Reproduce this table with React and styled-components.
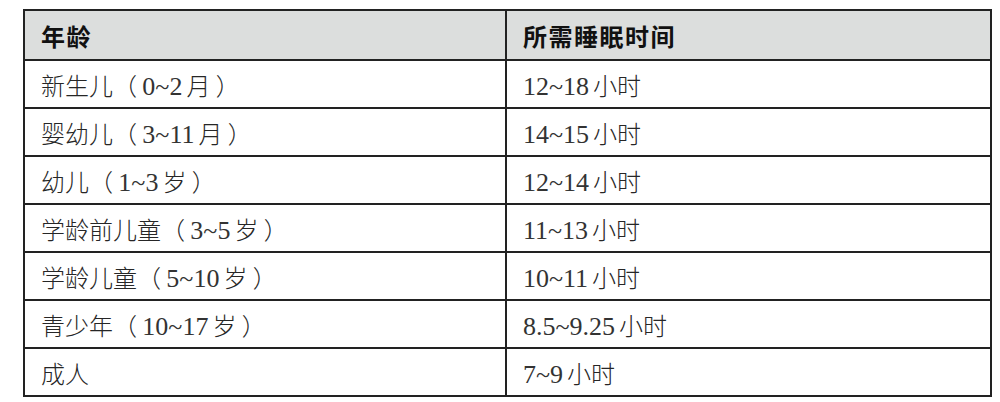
import React from "react";
import styled, { createGlobalStyle } from "styled-components";

const GlobalStyle = createGlobalStyle`
  html, body {
    margin: 0;
    padding: 0;
    background: #ffffff;
  }
  body {
    font-family: "Liberation Serif", "Noto Sans CJK SC", serif;
    color: #1c1c1c;
  }
`;

const Page = styled.div`
  width: 1000px;
  height: 402px;
  padding: 9px 0 0 23px;
  box-sizing: border-box;
`;

const Table = styled.table`
  width: 969px;
  border-collapse: collapse;
  table-layout: fixed;
  border: 2px solid #222;
`;

const HeadRow = styled.tr`
  height: 50px;
  background: #dcdedd;
`;

const Row = styled.tr`
  height: 48px;
`;

const HeadCell = styled.th`
  border: 2px solid #222;
  padding: 0 0 0 16px;
  text-align: left;
  font-family: "Noto Sans CJK SC", sans-serif;
  font-weight: 700;
  font-size: 24px;
  letter-spacing: 1.5px;
  color: #111;
  width: ${(p) => p.$w || "auto"};
`;

const Cell = styled.td`
  border: 2px solid #222;
  padding: 0 0 0 16px;
  font-family: "Noto Sans CJK SC", sans-serif;
  font-size: 24px;
  font-weight: 300;
  white-space: pre;
  color: #262626;
`;

const Num = styled.span`
  font-family: "Liberation Serif", serif;
  font-size: 26px;
  color: #333;
  margin-right: 4px;
`;

const rows = [
  ["新生儿（ 0~2月 ）", "12~18小时"],
  ["婴幼儿（ 3~11月 ）", "14~15小时"],
  ["幼儿（ 1~3岁 ）", "12~14小时"],
  ["学龄前儿童（ 3~5岁 ）", "11~13小时"],
  ["学龄儿童（ 5~10岁 ）", "10~11小时"],
  ["青少年（ 10~17岁 ）", "8.5~9.25小时"],
  ["成人", "7~9小时"],
];

// digits get the serif face, the rest stays in the CJK face
function Mixed({ text }) {
  return text
    .split(/([0-9.~]+)/)
    .map((part, i) =>
      /^[0-9.~]+$/.test(part) ? <Num key={i}>{part}</Num> : part
    );
}

export default function App() {
  return (
    <>
      <GlobalStyle />
      <Page>
        <Table>
          <thead>
            <HeadRow>
              <HeadCell $w="464px">年龄</HeadCell>
              <HeadCell>所需睡眠时间</HeadCell>
            </HeadRow>
          </thead>
          <tbody>
            {rows.map(([age, hours]) => (
              <Row key={age}>
                <Cell>
                  <Mixed text={age} />
                </Cell>
                <Cell>
                  <Mixed text={hours} />
                </Cell>
              </Row>
            ))}
          </tbody>
        </Table>
      </Page>
    </>
  );
}
